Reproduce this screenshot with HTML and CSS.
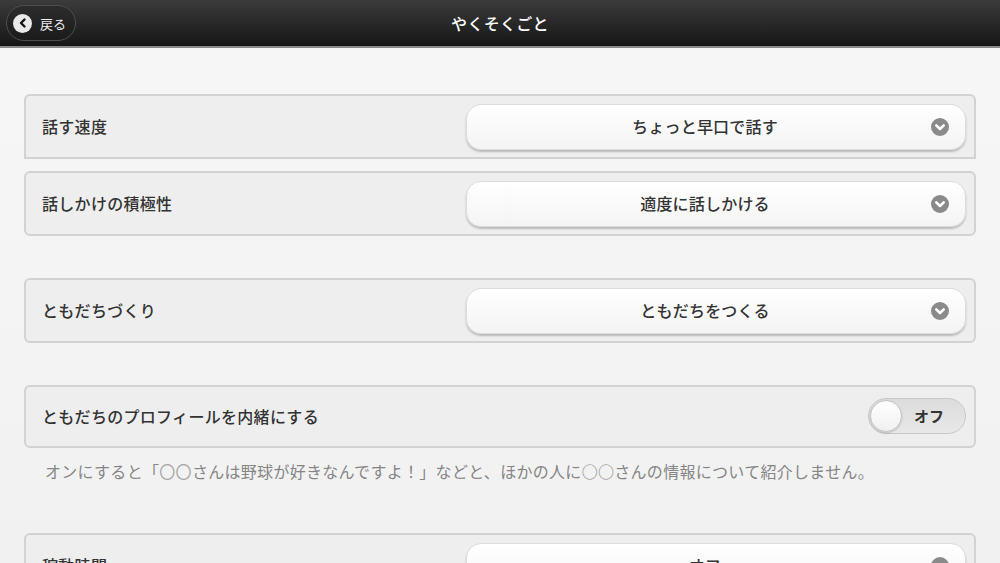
FILE: index.html
```html
<!DOCTYPE html>
<html lang="ja">
<head>
<meta charset="utf-8">
<link rel="stylesheet" href="styles.css">
</head>
<body>
<header class="topbar">
  <button class="back">
    <span class="back-icon"><svg width="12" height="12" viewBox="0 0 12 12"><path d="M7.5 2.5 L4 6 L7.5 9.5" fill="none" stroke="#111" stroke-width="2.4" stroke-linecap="round" stroke-linejoin="round"/></svg></span>
    <span class="back-label">戻る</span>
  </button>
  <h1 class="title">やくそくごと</h1>
</header>
<main class="content">
  <section class="group group-tight">
    <div class="row row-first">
      <span class="label">話す速度</span>
      <div class="select"><span class="select-text">ちょっと早口で話す</span><span class="chev"><svg width="18" height="18" viewBox="0 0 18 18"><circle cx="9" cy="9" r="9" fill="#8a8a8a"/><path d="M5.3 7.4 L9 11 L12.7 7.4" fill="none" stroke="#fff" stroke-width="2.6" stroke-linecap="round" stroke-linejoin="round"/></svg></span></div>
    </div>
    <div class="row">
      <span class="label">話しかけの積極性</span>
      <div class="select"><span class="select-text">適度に話しかける</span><span class="chev"><svg width="18" height="18" viewBox="0 0 18 18"><circle cx="9" cy="9" r="9" fill="#8a8a8a"/><path d="M5.3 7.4 L9 11 L12.7 7.4" fill="none" stroke="#fff" stroke-width="2.6" stroke-linecap="round" stroke-linejoin="round"/></svg></span></div>
    </div>
  </section>
  <section class="group">
    <div class="row">
      <span class="label">ともだちづくり</span>
      <div class="select"><span class="select-text">ともだちをつくる</span><span class="chev"><svg width="18" height="18" viewBox="0 0 18 18"><circle cx="9" cy="9" r="9" fill="#8a8a8a"/><path d="M5.3 7.4 L9 11 L12.7 7.4" fill="none" stroke="#fff" stroke-width="2.6" stroke-linecap="round" stroke-linejoin="round"/></svg></span></div>
    </div>
  </section>
  <section class="group">
    <div class="row row-toggle">
      <span class="label">ともだちのプロフィールを内緒にする</span>
      <div class="toggle"><span class="knob"></span><span class="toggle-text">オフ</span></div>
    </div>
    <p class="help">オンにすると「<span class="circ">〇〇</span>さんは野球が好きなんですよ！」などと、ほかの人に○○さんの情報について紹介しません。</p>
  </section>
  <section class="group group-last">
    <div class="row">
      <span class="label">稼動時間</span>
      <div class="select"><span class="select-text">オフ</span><span class="chev"><svg width="18" height="18" viewBox="0 0 18 18"><circle cx="9" cy="9" r="9" fill="#8a8a8a"/><path d="M5.3 7.4 L9 11 L12.7 7.4" fill="none" stroke="#fff" stroke-width="2.6" stroke-linecap="round" stroke-linejoin="round"/></svg></span></div>
    </div>
  </section>
</main>
</body>
</html>
```

FILE: styles.css
```css
* { box-sizing: border-box; }
html, body { margin: 0; padding: 0; }
body {
  width: 1000px;
  height: 563px;
  overflow: hidden;
  background: linear-gradient(#f7f7f7, #f1f1f1);
  font-family: "Noto Sans CJK JP", "Noto Sans", sans-serif;
  color: #333;
}
.topbar {
  position: relative;
  height: 48px;
  background: linear-gradient(#3b3b3b, #161616);
  border-bottom: 2px solid #8a8a8a;
  display: flex;
  align-items: center;
  justify-content: center;
}
.back {
  position: absolute;
  left: 6px;
  top: 5px;
  width: 70px;
  height: 36px;
  border-radius: 18px;
  border: 1px solid #4e4e4e;
  background: linear-gradient(#2c2c2c, #1b1b1b);
  display: flex;
  align-items: center;
  padding: 0 0 0 6px;
  gap: 8px;
  font-family: inherit;
  cursor: pointer;
}
.back-icon {
  width: 19px;
  height: 19px;
  border-radius: 50%;
  background: #e9e9e9;
  display: flex;
  align-items: center;
  justify-content: center;
}
.back-label {
  color: #eee;
  font-size: 13px;
  line-height: 1;
}
.title {
  margin: 0;
  color: #fff;
  font-size: 16px;
  font-weight: 500;
  line-height: 1;
  letter-spacing: 0.3px;
}
.content {
  padding: 46px 24px 0;
  display: flex;
  flex-direction: column;
  gap: 42px;
}
.group {
  display: flex;
  flex-direction: column;
  gap: 11px;
}
.group-tight { gap: 12px; }
.row {
  height: 65px;
  flex: none;
  border: 2px solid #d2d2d2;
  border-radius: 6px;
  background: #eeeeee;
  display: flex;
  align-items: center;
  justify-content: space-between;
  padding: 0 8px 0 16px;
}
.row-first {
  border-radius: 6px 6px 0 0;
}
.row-toggle {
  height: 63px;
}
.label {
  font-size: 16px;
  font-weight: 500;
  color: #333;
  line-height: 1;
  letter-spacing: 0.3px;
  margin-top: -2px;
}
.select {
  width: 500px;
  height: 46px;
  border-radius: 15px;
  border: 1px solid #dcdcdc;
  background: linear-gradient(#ffffff, #f4f4f4);
  box-shadow: 0 2px 2px rgba(0, 0, 0, 0.22);
  display: flex;
  align-items: center;
  position: relative;
  justify-content: center;
  padding-right: 22px;
}
.select-text {
  font-size: 16px;
  font-weight: 500;
  color: #333;
  line-height: 1;
  letter-spacing: 0.2px;
  margin-top: -2px;
}
.chev {
  position: absolute;
  right: 16px;
  top: 13px;
  width: 18px;
  height: 18px;
  display: block;
}
.chev svg { display: block; }
.toggle {
  width: 98px;
  height: 36px;
  border-radius: 18px;
  border: 1px solid #c8c8c8;
  background: linear-gradient(#dcdcdc, #e8e8e8);
  display: flex;
  align-items: center;
  padding: 0 0 0 1px;
  gap: 12px;
  margin-top: -2px;
}
.knob {
  width: 32px;
  height: 32px;
  border-radius: 50%;
  background: linear-gradient(#ffffff, #f0f0f0);
  border: 1px solid #c4c4c4;
  box-shadow: 0 1px 2px rgba(0,0,0,0.2);
}
.toggle-text {
  font-size: 15px;
  font-weight: 700;
  color: #333;
  line-height: 1;
}
.help {
  margin: 0;
  padding: 0 0 0 21px;
  font-size: 16px;
  color: #858585;
  line-height: 24px;
  letter-spacing: 0.3px;
}
.circ { color: #a8a8a8; }
.group-last { margin-top: 8px; }
```
